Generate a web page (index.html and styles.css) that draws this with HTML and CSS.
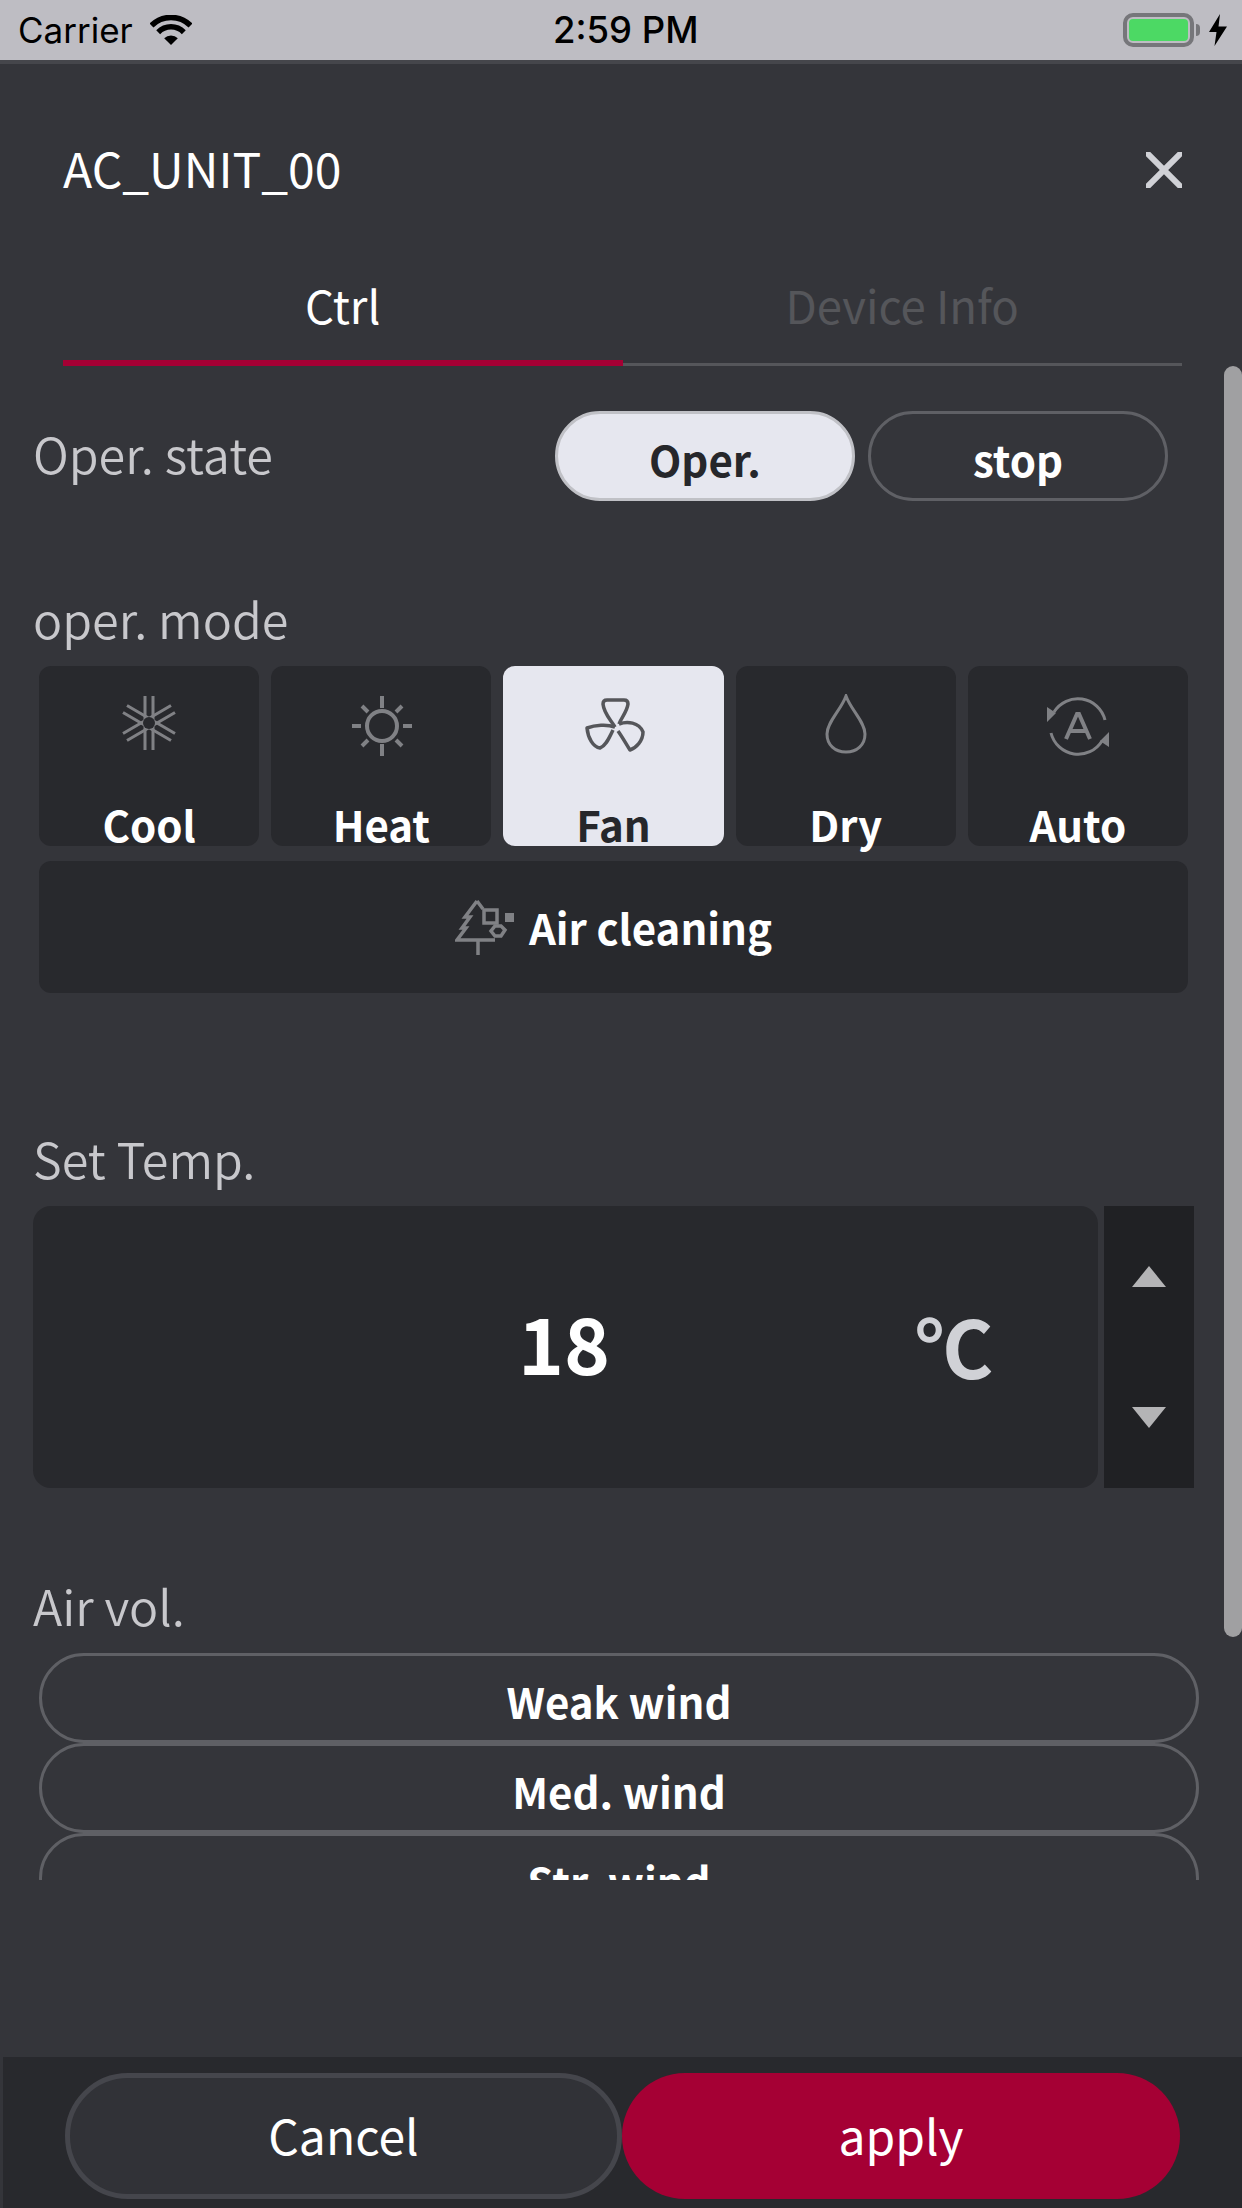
FILE: index.html
```html
<!DOCTYPE html>
<html>
<head>
	<title>AC_UNIT_00</title>
	<meta charset="utf-8">
	<link rel="stylesheet" href="styles.css">
</head>
<body>
<div class="screen">
	<div class="status">
		<div class="status-left">
			<span class="carrier">Carrier</span>
			<svg class="wifi" width="42" height="30" viewBox="0 0 42 30">
				<path d="M1.5 10.5A27.5 27.5 0 0 1 40.5 10.5" fill="none" stroke="#000" stroke-width="5.5"/>
				<path d="M8.2 17.2A18 18 0 0 1 33.8 17.2" fill="none" stroke="#000" stroke-width="5.5"/>
				<path d="M21 30L14.2 23.2A9.6 9.6 0 0 1 27.8 23.2Z" fill="#000"/>
			</svg>
		</div>
		<span class="time">2:59 PM</span>
		<div class="status-right">
			<div class="battery"><div class="battery-fill"></div></div>
			<div class="battery-tip"></div>
			<svg class="bolt" width="18" height="32" viewBox="0 0 18 32">
				<path d="M11 0L0 18H7.5L5.5 32L18 12.5H9.5Z" fill="#000"/>
			</svg>
		</div>
	</div>
	<div class="status-line"></div>

	<div class="title-row">
		<span class="title">AC_UNIT_00</span>
		<svg class="close" width="36" height="36" viewBox="0 0 36 36">
			<path d="M0 0L36 36M36 0L0 36" stroke="#d0d1d6" stroke-width="6"/>
		</svg>
	</div>
	<div class="tabs">
		<div class="tab current">Ctrl</div>
		<div class="tab">Device Info</div>
	</div>

	<div class="scroll">
		<div class="state-row">
			<div class="label state-label">Oper. state</div>
			<div class="state-btns">
				<div class="pill current">Oper.</div>
				<div class="pill">stop</div>
			</div>
		</div>

		<div class="label mode-label">oper. mode</div>
		<div class="modes">
			<div class="mode">
				<svg class="icon" width="64" height="64" viewBox="0 0 64 64">
					<g fill="none" stroke="#808185" stroke-width="3">
						<path d="M28 2V56M36 2V56"/>
						<path d="M10 11.5L58 39.5M6 18.5L54 46.5"/>
						<path d="M6 39.5L54 11.5M10 46.5L58 18.5"/>
					</g>
					<circle cx="32" cy="29" r="6" fill="#28292d"/>
				</svg>
				<span>Cool</span>
			</div>
			<div class="mode">
				<svg class="icon" width="64" height="64" viewBox="0 0 64 64">
					<g fill="none" stroke="#808185" stroke-width="4">
						<circle cx="33" cy="32" r="15"/>
						<path d="M33 2V14M33 50V62M3 32H12M54 32H63M13 12L19 18M53 12L47 18M13 52L19 46M53 52L47 46"/>
					</g>
				</svg>
				<span>Heat</span>
			</div>
			<div class="mode current">
				<svg class="icon" width="64" height="64" viewBox="0 0 64 64">
					<g fill="none" stroke="#55565a" stroke-width="3.5" stroke-linejoin="round">
						<path d="M34 33C30 26 23 20 22 10Q22 6 26 6H43Q47 6 47 10C46 18 40 24 38 30"/>
						<path d="M34 33C26 30 14 31 6 34C7 44 12 53 19 54C25 52 28 44 32 36"/>
						<path d="M38 30C46 27 58 28 62 38C62 47 55 54 49 56C45 50 42 44 37 37"/>
					</g>
				</svg>
				<span>Fan</span>
			</div>
			<div class="mode">
				<svg class="icon" width="64" height="64" viewBox="0 0 64 64">
					<path d="M32 2C27 16 13 28 13 40C13 51 21 58 32 58C43 58 51 51 51 40C51 28 37 16 32 2Z" fill="none" stroke="#808185" stroke-width="3"/>
				</svg>
				<span>Dry</span>
			</div>
			<div class="mode">
				<svg class="icon" width="64" height="64" viewBox="0 0 64 64">
					<g fill="none" stroke="#808185" stroke-width="3">
						<path d="M8 18A28 28 0 0 1 59 26"/>
						<path d="M56 47A28 28 0 0 1 5 39"/>
						<path d="M20 45L31 20H33L44 45M24 37H40" stroke-width="4"/>
					</g>
					<path d="M1 13L10 19L1 28ZM63 53L54 47L63 38Z" fill="#808185"/>
				</svg>
				<span>Auto</span>
			</div>
		</div>
		<div class="air-clean">
			<svg width="60" height="56" viewBox="0 0 60 56">
				<g fill="none" stroke="#808185" stroke-width="3.5">
					<path d="M22 2L10 18H15L7 29H11L2 41H40M22 2L28 10M23 41V56"/>
					<rect x="29" y="11" width="13" height="13"/>
					<path d="M40 27H46L50 31L46 37H40L36 32Z"/>
				</g>
				<rect x="50" y="14" width="9" height="9" fill="#808185"/>
			</svg>
			<span class="air-text">Air cleaning</span>
		</div>

		<div class="label temp-label">Set Temp.</div>
		<div class="temp">
			<div class="temp-box">
				<span class="temp-val">18</span>
				<span class="temp-unit">℃</span>
			</div>
			<div class="stepper">
				<div class="arrow-up"></div>
				<div class="arrow-down"></div>
			</div>
		</div>

		<div class="label vol-label">Air vol.</div>
		<div class="wind">Weak wind</div>
		<div class="wind">Med. wind</div>
		<div class="wind">Str. wind</div>

		<div class="scrollbar"></div>
	</div>

	<div class="footer">
		<div class="foot-btn cancel">Cancel</div>
		<div class="foot-btn apply">apply</div>
	</div>
</div>
</body>
</html>
```

FILE: styles.css
```css
body,div,span{margin:0;padding:0;}
body{background:#34353a;font-family:"Noto Sans CJK KR","Noto Sans",sans-serif;}
.screen{width:1242px;height:2208px;background:#34353a;display:flex;flex-direction:column;overflow:hidden;}

.status{height:60px;background:#bebdc3;display:flex;align-items:center;justify-content:space-between;font-family:Inter,"Liberation Sans",sans-serif;color:#000;position:relative;}
.status-left{display:flex;align-items:center;padding-left:18px;}
.carrier{font-size:35px;}
.wifi{margin-left:17px;}
.time{position:absolute;left:553px;top:8px;font-size:36.5px;font-weight:500;}
.status-right{display:flex;align-items:center;padding-right:15px;}
.battery{width:71px;height:34px;box-sizing:border-box;border:4px solid #76767a;border-radius:10px;padding:2px;}
.battery-fill{height:100%;background:#4cd964;border-radius:4px;}
.battery-tip{width:4px;height:12px;margin-left:2px;background:#76767a;border-radius:0 6px 6px 0;}
.bolt{margin-left:9px;}
.status-line{height:4px;background:#45464b;}

.title-row{display:flex;align-items:center;justify-content:space-between;padding:76px 60px 0 63px;height:60px;}
.title{font-size:48px;line-height:60px;color:#fff;margin-bottom:6px;}
.tabs{display:flex;margin:76px 60px 0 63px;}
.tab{width:50%;height:90px;box-sizing:border-box;border-bottom:3px solid #55565a;font-size:45.5px;line-height:56px;text-align:center;color:#55565a;}
.tab.current{border-bottom:6px solid #a50034;color:#fff;}

.scroll{height:1514px;overflow:hidden;position:relative;}
.scrollbar{position:absolute;right:0;top:0;width:18px;height:1271px;background:#a0a0a2;border-radius:9px;}
.label{font-size:48.5px;line-height:60px;color:#c8c8cc;padding-left:33px;font-weight:350;}
.state-label{margin-bottom:6px;}

.state-row{display:flex;align-items:center;justify-content:space-between;margin-top:45px;padding-right:74px;}
.state-btns{display:flex;gap:13px;}
.pill{width:300px;height:90px;box-sizing:border-box;border:3px solid #5f6065;border-radius:45px;font-size:42px;font-weight:700;line-height:90px;text-align:center;color:#fff;}
.pill.current{background:#e6e7ef;border-color:#c0c1c6;color:#26272b;}

.mode-label{margin:87px 0 18px;}
.modes{display:grid;grid-template-columns:repeat(5,1fr);gap:12px;margin-left:39px;width:1149px;}
.mode{height:180px;box-sizing:border-box;padding-top:28px;background:#28292d;border-radius:12px;display:flex;flex-direction:column;align-items:center;color:#fff;font-size:42px;font-weight:700;}
.mode .icon{display:block;flex-shrink:0;}
.mode span{margin-top:36px;line-height:60px;flex-shrink:0;}
.mode.current{background:#e6e7ef;color:#26272b;}
.air-clean{height:132px;margin:15px 0 0 39px;width:1149px;background:#28292d;border-radius:12px;display:flex;align-items:center;justify-content:center;gap:14px;color:#fff;font-size:42px;font-weight:700;}
.air-text{margin-bottom:2px;}

.temp-label{margin:135px 0 18px;}
.temp{display:flex;gap:6px;padding-left:33px;}
.temp-box{width:1065px;height:282px;background:#28292d;border-radius:18px;display:flex;align-items:center;padding:0 0 12px 485px;box-sizing:border-box;}
.temp-val{font-size:78px;font-weight:700;color:#fff;}
.temp-unit{font-size:78px;font-weight:700;color:#d0d1d6;margin:8px 0 0 305px;}
.stepper{width:90px;height:282px;box-sizing:border-box;padding:60px 0;background:#202124;display:flex;flex-direction:column;justify-content:space-between;align-items:center;}
.arrow-up{border-left:17px solid transparent;border-right:17px solid transparent;border-bottom:21px solid #b4b4b6;}
.arrow-down{border-left:17px solid transparent;border-right:17px solid transparent;border-top:21px solid #b4b4b6;}

.vol-label{margin:87px 0 18px;}
.wind{margin-left:39px;width:1160px;height:90px;box-sizing:border-box;border:3px solid #5f6065;border-radius:45px;font-size:42px;font-weight:700;line-height:90px;text-align:center;color:#fff;}

.footer{margin:177px 0 0 3px;height:151px;background:#28292d;display:flex;padding:16px 0 0 62px;box-sizing:border-box;}
.foot-btn{height:126px;box-sizing:border-box;border-radius:63px;font-size:48px;text-align:center;color:#fff;}
.cancel{width:557px;border:5px solid #45464c;background:#313237;line-height:113px;}
.apply{width:558px;background:#a50034;line-height:122px;}
```
